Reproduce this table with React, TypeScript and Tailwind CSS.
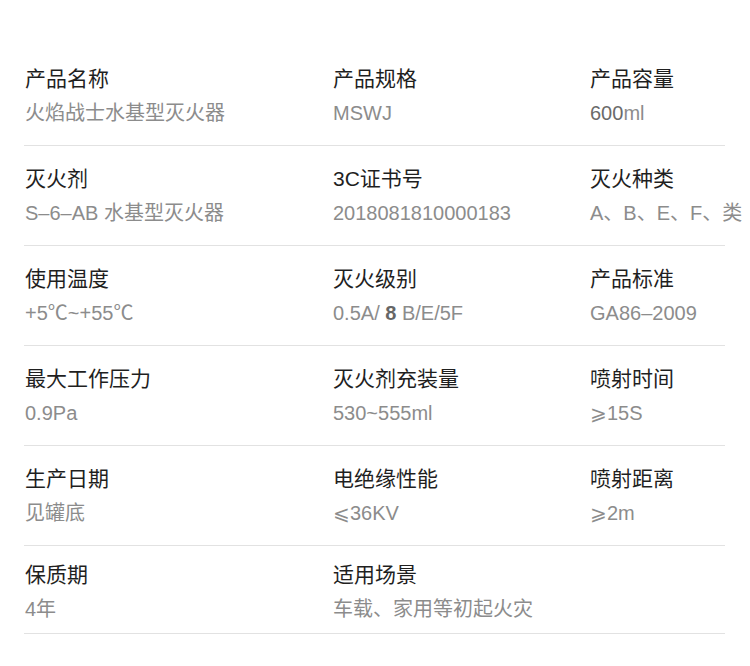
import type { ReactNode } from 'react'

type Spec = { label: string; value: ReactNode }

const rows: Spec[][] = [
  [
    { label: '产品名称', value: '火焰战士水基型灭火器' },
    { label: '产品规格', value: 'MSWJ' },
    { label: '产品容量', value: <><span className="text-[#6a6a6a]">600</span>ml</> },
  ],
  [
    { label: '灭火剂', value: 'S–6–AB 水基型灭火器' },
    { label: '3C证书号', value: '2018081810000183' },
    { label: '灭火种类', value: 'A、B、E、F、类' },
  ],
  [
    { label: '使用温度', value: '+5℃~+55℃' },
    { label: '灭火级别', value: <>0.5A/ <span className="font-bold text-[#666]">8</span> B/E/5F</> },
    { label: '产品标准', value: 'GA86–2009' },
  ],
  [
    { label: '最大工作压力', value: '0.9Pa' },
    { label: '灭火剂充装量', value: '530~555ml' },
    { label: '喷射时间', value: '⩾15S' },
  ],
  [
    { label: '生产日期', value: '见罐底' },
    { label: '电绝缘性能', value: '⩽36KV' },
    { label: '喷射距离', value: '⩾2m' },
  ],
  [
    { label: '保质期', value: '4年' },
    { label: '适用场景', value: '车载、家用等初起火灾' },
  ],
]

function Cell({ spec }: { spec: Spec }) {
  return (
    <div className="flex flex-col whitespace-nowrap">
      <div className="text-[21px] leading-[26px] text-[#1f1f1f]">{spec.label}</div>
      <div className="mt-[9px] text-[20px] leading-[24px] text-[#8c8c8c]">{spec.value}</div>
    </div>
  )
}

export default function App() {
  return (
    <div className="min-h-[666px] bg-white pt-[46px] font-['Liberation_Sans','Noto_Sans_CJK_SC',sans-serif]">
      <div className="ml-[24px] w-[701px]">
        {rows.map((row, i) => {
          const last = i === rows.length - 1
          return (
            <div
              key={i}
              className={
                last
                  ? 'grid grid-cols-[308px_257px_1fr] px-[1px] pt-[16px] pb-[12px] border-b border-[#e2e2e2]'
                  : 'grid grid-cols-[308px_257px_1fr] px-[1px] pt-[20px] pb-[20px] border-b border-[#e2e2e2]'
              }
            >
              {row.map((spec) => (
                <Cell key={spec.label} spec={spec} />
              ))}
            </div>
          )
        })}
      </div>
    </div>
  )
}
